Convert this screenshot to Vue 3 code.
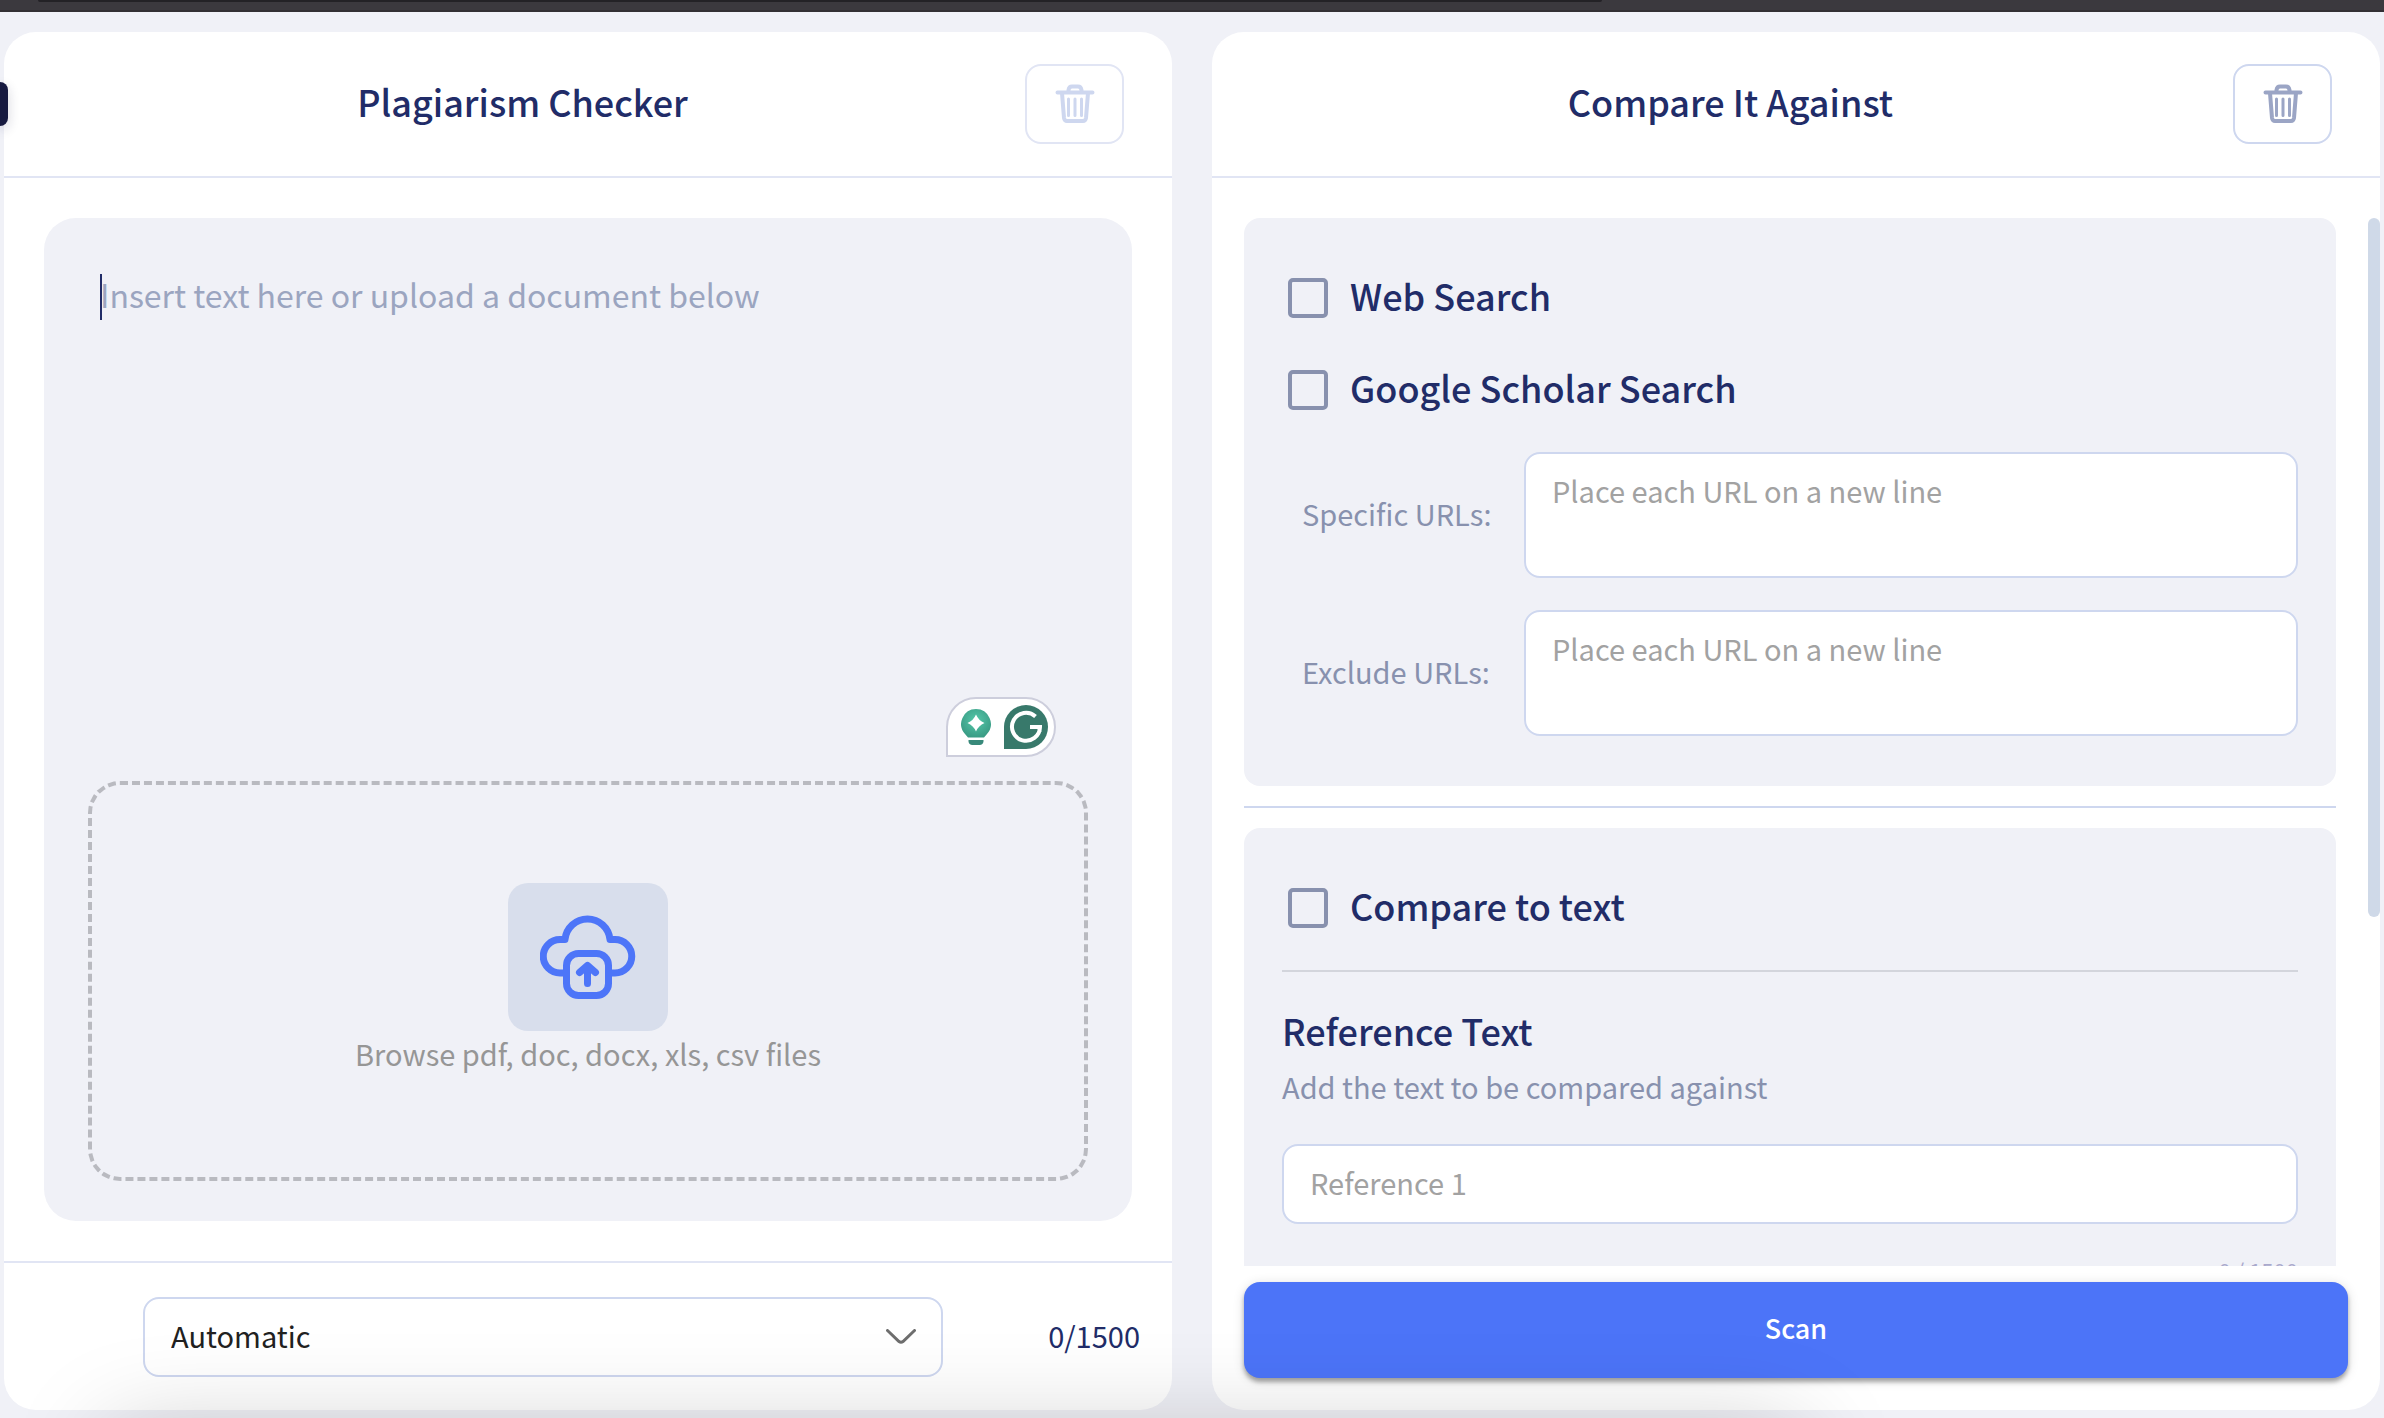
<script setup>
import { ref } from 'vue'

const documentText = ref('')
const language = ref('Automatic')
const reference = ref('')
const urlFields = ref([
  { id: 'specific-urls', label: 'Specific URLs:', value: '' },
  { id: 'exclude-urls', label: 'Exclude URLs:', value: '' },
])
const searches = ref([
  { id: 'web-search', label: 'Web Search', checked: false },
  { id: 'scholar-search', label: 'Google Scholar Search', checked: false },
])
const compareToText = ref(false)
</script>

<template>
  <div class="page">
    <div class="browser-edge"><div class="browser-field"></div></div>
    <div class="side-tab"></div>

    <main class="panels">
      <section class="panel">
        <header class="panel-head">
          <h1>Plagiarism Checker</h1>
          <button class="trash" type="button" disabled aria-label="Clear text">
            <svg viewBox="0 0 40 40" width="40" height="40">
              <path class="line" d="M2.500 8.500H37.500M13.500 8V6Q14 2.500 17 2.500H23Q26 2.500 26.500 6V8M7 9L9 34Q9.500 37 12 37H28Q30.500 37 31 34L33 9" />
              <path class="line thin" d="M13.500 15V31.500M20 15V31.500M26.500 15V31.500" />
            </svg>
          </button>
        </header>

        <div class="editor-wrap">
          <div class="editor">
            <div class="writing">
              <textarea v-model="documentText" aria-label="Document text" placeholder="Insert text here or upload a document below"></textarea>
              <span class="caret"></span>
              <div class="assistant">
                <svg viewBox="0 0 30 36" width="30" height="36">
                  <defs>
                    <radialGradient id="bulb" cx="0.5" cy="0.4" r="0.6">
                      <stop offset="0" stop-color="#55c7a9" />
                      <stop offset="1" stop-color="#3a9c85" />
                    </radialGradient>
                  </defs>
                  <path fill="url(#bulb)" d="M15 0a15 15 0 0 1 11 25L23 28.500H7L4 25A15 15 0 0 1 15 0z" />
                  <path fill="#38897a" d="M7.500 31h15v1.500a4 4 0 0 1-4 3.500h-7a4 4 0 0 1-4-3.500z" />
                  <path fill="#fff" d="M15 5.500Q17.500 11.500 23.500 14Q17.500 16.500 15 22.500Q12.500 16.500 6.500 14Q12.500 11.500 15 5.500z" />
                </svg>
                <svg viewBox="0 0 44 44" width="44" height="44">
                  <path fill="#38796b" d="M22 0a22 22 0 0 1 0 44H0V22A22 22 0 0 1 22 0z" />
                  <path fill="none" stroke="#fff" stroke-width="4" d="M31.500 11.500A14 14 0 1 0 36 22H26M35.500 22V27" />
                </svg>
              </div>
            </div>
            <button class="dropzone" type="button">
              <span class="cloud">
                <svg viewBox="0 0 96 84" width="96" height="84">
                  <path class="upload" d="M26 58H20A16.500 16.500 0 0 1 20 24.500H25A22.600 22.600 0 0 1 70 24.500H75A16.500 16.500 0 0 1 75 58H69" />
                  <rect class="upload" x="26.500" y="38.500" width="42" height="42" rx="12" />
                  <path class="upload" d="M47.500 68.500V52M39.500 57.500L47.500 50.500L55.500 57.500" />
                </svg>
              </span>
              <span>Browse pdf, doc, docx, xls, csv files</span>
            </button>
          </div>
        </div>

        <footer class="panel-foot">
          <div class="select-wrap">
            <select v-model="language" aria-label="Language">
              <option>Automatic</option>
            </select>
            <svg class="chevron" viewBox="0 0 30 16" width="30" height="16">
              <path d="M1.500 1.500L13 12.500Q15 14 17 12.500L28.500 1.500" />
            </svg>
          </div>
          <span class="count">0/1500</span>
        </footer>
      </section>

      <section class="panel">
        <header class="panel-head">
          <h2>Compare It Against</h2>
          <button class="trash" type="button" aria-label="Clear sources">
            <svg viewBox="0 0 40 40" width="40" height="40">
              <path class="line" d="M2.500 8.500H37.500M13.500 8V6Q14 2.500 17 2.500H23Q26 2.500 26.500 6V8M7 9L9 34Q9.500 37 12 37H28Q30.500 37 31 34L33 9" />
              <path class="line thin" d="M13.500 15V31.500M20 15V31.500M26.500 15V31.500" />
            </svg>
          </button>
        </header>

        <div class="sources">
          <div class="group">
            <label v-for="s in searches" :key="s.id" class="check">
              <input v-model="s.checked" type="checkbox" /><span>{{ s.label }}</span>
            </label>
            <div v-for="f in urlFields" :key="f.id" class="url-row">
              <label :for="f.id">{{ f.label }}</label>
              <textarea :id="f.id" v-model="f.value" placeholder="Place each URL on a new line"></textarea>
            </div>
          </div>
          <hr class="split" />
          <div class="group">
            <label class="check"><input v-model="compareToText" type="checkbox" /><span>Compare to text</span></label>
            <hr class="rule" />
            <h3>Reference Text</h3>
            <label class="hint" for="reference">Add the text to be compared against</label>
            <input id="reference" v-model="reference" class="reference" type="text" placeholder="Reference 1" />
            <p class="mini-count">0 / 1500</p>
          </div>
          <div class="scroll-thumb"></div>
        </div>

        <div class="action">
          <button class="scan" type="button">Scan</button>
        </div>
      </section>
    </main>
    <div class="dock-shadow"></div>
  </div>
</template>

<style>
body {
  background: #f0f1f7;
}
</style>

<style scoped>
* {
  box-sizing: border-box;
}
.page {
  height: 100vh;
  display: flex;
  flex-direction: column;
  overflow: hidden;
  position: relative;
  background: #f0f1f7;
  color: #212c68;
  font-family: "Noto Sans CJK JP", "Noto Sans", sans-serif;
  font-size: 29px;
  line-height: 40px;
}
button, input, select, textarea {
  font: inherit;
  margin: 0;
  outline: none;
}
h1, h2, h3, p, hr {
  margin: 0;
}
.browser-edge {
  flex: none;
  height: 12px;
  background: #3b393e;
  border-bottom: 2px solid #322f34;
}
.browser-field {
  height: 2px;
  width: 1564px;
  margin-left: 38px;
  background: #232226;
  border-radius: 0 0 4px 4px;
}
.side-tab {
  position: absolute;
  left: 0;
  top: 82px;
  width: 8px;
  height: 44px;
  border-radius: 0 8px 8px 0;
  background: #171a40;
  box-shadow: 0 4px 12px rgba(23, 26, 64, 0.2);
}
.panels {
  flex: 1;
  min-height: 0;
  display: flex;
  gap: 40px;
  padding: 20px 4px 8px;
}
.panel {
  flex: 1;
  min-width: 0;
  display: flex;
  flex-direction: column;
  background: #fff;
  border-radius: 32px;
}
.panel-head {
  flex: none;
  display: flex;
  align-items: center;
  padding: 32px 48px 32px 16px;
  border-bottom: 2px solid #e1e5f4;
}
h1, h2, h3, .check {
  font-size: 36px;
  font-weight: 500;
  line-height: 48px;
}
h1, h2 {
  flex: 1;
  padding-bottom: 6px;
  text-align: center;
}
.trash {
  width: 99px;
  height: 80px;
  display: grid;
  place-items: center;
  padding: 0;
  background: #fff;
  border: 2px solid #ced7ef;
  border-radius: 16px;
  color: #9ba5c5;
}
.trash:disabled {
  border-color: #e1e5f4;
  color: #ced7ef;
}
.line {
  fill: none;
  stroke: currentColor;
  stroke-width: 4;
  stroke-linecap: round;
}
.line.thin {
  stroke-width: 3;
}
.editor-wrap {
  flex: 1;
  min-height: 0;
  display: flex;
  padding: 40px;
}
.editor {
  flex: 1;
  display: flex;
  flex-direction: column;
  padding: 56px 44px 40px;
  background: #f0f1f7;
  border-radius: 32px;
}
.writing {
  flex: 1;
  display: flex;
  position: relative;
}
.writing textarea {
  flex: 1;
  padding: 0 12px;
  border: 0;
  resize: none;
  background: transparent;
  color: #212c68;
  font-size: 32px;
  line-height: 40px;
}
.writing textarea::placeholder {
  color: #9ba5c0;
}
.caret {
  position: absolute;
  left: 12px;
  top: 0;
  width: 2px;
  height: 46px;
  background: #212c68;
}
.assistant {
  position: absolute;
  right: 32px;
  bottom: 24px;
  width: 110px;
  height: 60px;
  display: flex;
  align-items: center;
  justify-content: space-between;
  padding: 0 6px 0 13px;
  background: #fff;
  border: 2px solid #cdcedc;
  border-radius: 30px 30px 30px 0;
}
.dropzone {
  flex: none;
  height: 400px;
  display: flex;
  flex-direction: column;
  align-items: center;
  justify-content: center;
  gap: 2px;
  padding: 0 0 6px;
  border: 4px dashed #b9bac0;
  border-radius: 32px;
  background: transparent;
  color: #969696;
}
.cloud {
  width: 160px;
  height: 148px;
  display: grid;
  place-items: center;
  border-radius: 20px;
  background: #d8deec;
}
.upload {
  fill: none;
  stroke: #4d75f8;
  stroke-width: 7;
  stroke-linecap: round;
  stroke-linejoin: round;
}
.panel-foot {
  flex: none;
  display: flex;
  align-items: center;
  padding: 34px 32px 33px 139px;
  border-top: 2px solid #e1e5f4;
}
.select-wrap {
  flex: 1;
  display: flex;
  position: relative;
}
select {
  flex: 1;
  height: 80px;
  padding: 0 26px 4px;
  appearance: none;
  background: transparent;
  border: 2px solid #ced7ef;
  border-radius: 16px;
  color: #212121;
}
.chevron {
  position: absolute;
  right: 27px;
  top: 32px;
  fill: none;
  stroke: #6e6e6e;
  stroke-width: 3;
  stroke-linecap: round;
  pointer-events: none;
}
.count {
  width: 197px;
  padding-bottom: 4px;
  text-align: right;
}
.sources {
  flex: 1;
  min-height: 0;
  overflow: hidden;
  position: relative;
  margin-top: 40px;
  padding: 0 44px 0 32px;
}
.group {
  padding: 54px 38px 50px;
  background: #f0f1f7;
  border-radius: 16px;
}
.check {
  display: flex;
  align-items: center;
  gap: 22px;
  padding: 2px 0 2px 6px;
}
.check span {
  padding-bottom: 6px;
  line-height: 42px;
}
.check + .check {
  margin-top: 40px;
}
.check input {
  appearance: none;
  width: 40px;
  height: 40px;
  border: 4px solid #8891ae;
  border-radius: 5px;
}
.url-row {
  display: flex;
  align-items: center;
  margin-top: 32px;
}
.check + .url-row {
  margin-top: 36px;
}
.url-row label {
  width: 242px;
  padding: 0 0 4px 20px;
  color: #8891ae;
}
.url-row textarea {
  flex: 1;
  height: 126px;
  padding: 18px 26px;
  resize: none;
  border: 2px solid #ced7ef;
  border-radius: 16px;
  background: #fff;
  line-height: 36px;
}
.url-row textarea::placeholder,
.reference::placeholder {
  color: #a2a2a2;
}
.split {
  height: 2px;
  margin: 20px 0;
  border: 0;
  background: #ced7ef;
}
.rule {
  height: 2px;
  margin: 36px 0 34px;
  border: 0;
  background: #d3d5dc;
}
.hint {
  display: block;
  margin: 12px 0 38px;
  color: #8891ae;
}
.reference {
  display: block;
  width: 100%;
  height: 80px;
  padding: 0 26px 4px;
  border: 2px solid #ced7ef;
  border-radius: 16px;
  background: #fff;
}
.mini-count {
  margin-top: 30px;
  font-size: 22px;
  line-height: 32px;
  text-align: right;
  color: #aaa9cc;
}
.scroll-thumb {
  position: absolute;
  top: 0;
  right: 0;
  width: 12px;
  height: 699px;
  border-radius: 6px;
  background: #cfd9e8;
}
.action {
  flex: none;
  display: flex;
  padding: 16px 32px 32px;
}
.scan {
  flex: 1;
  height: 96px;
  padding: 0 0 4px;
  border: 0;
  border-radius: 16px;
  background: #4c74f8;
  color: #fff;
  font-size: 27px;
  font-weight: 500;
  box-shadow: 0 4px 4px rgba(0, 0, 0, 0.3), 0 2px 12px rgba(0, 0, 0, 0.14);
}
.dock-shadow {
  position: absolute;
  left: 110px;
  top: calc(100% + 16px);
  width: 1690px;
  height: 200px;
  box-shadow: 0 0 100px rgba(0, 0, 0, 0.22);
  pointer-events: none;
}
</style>
